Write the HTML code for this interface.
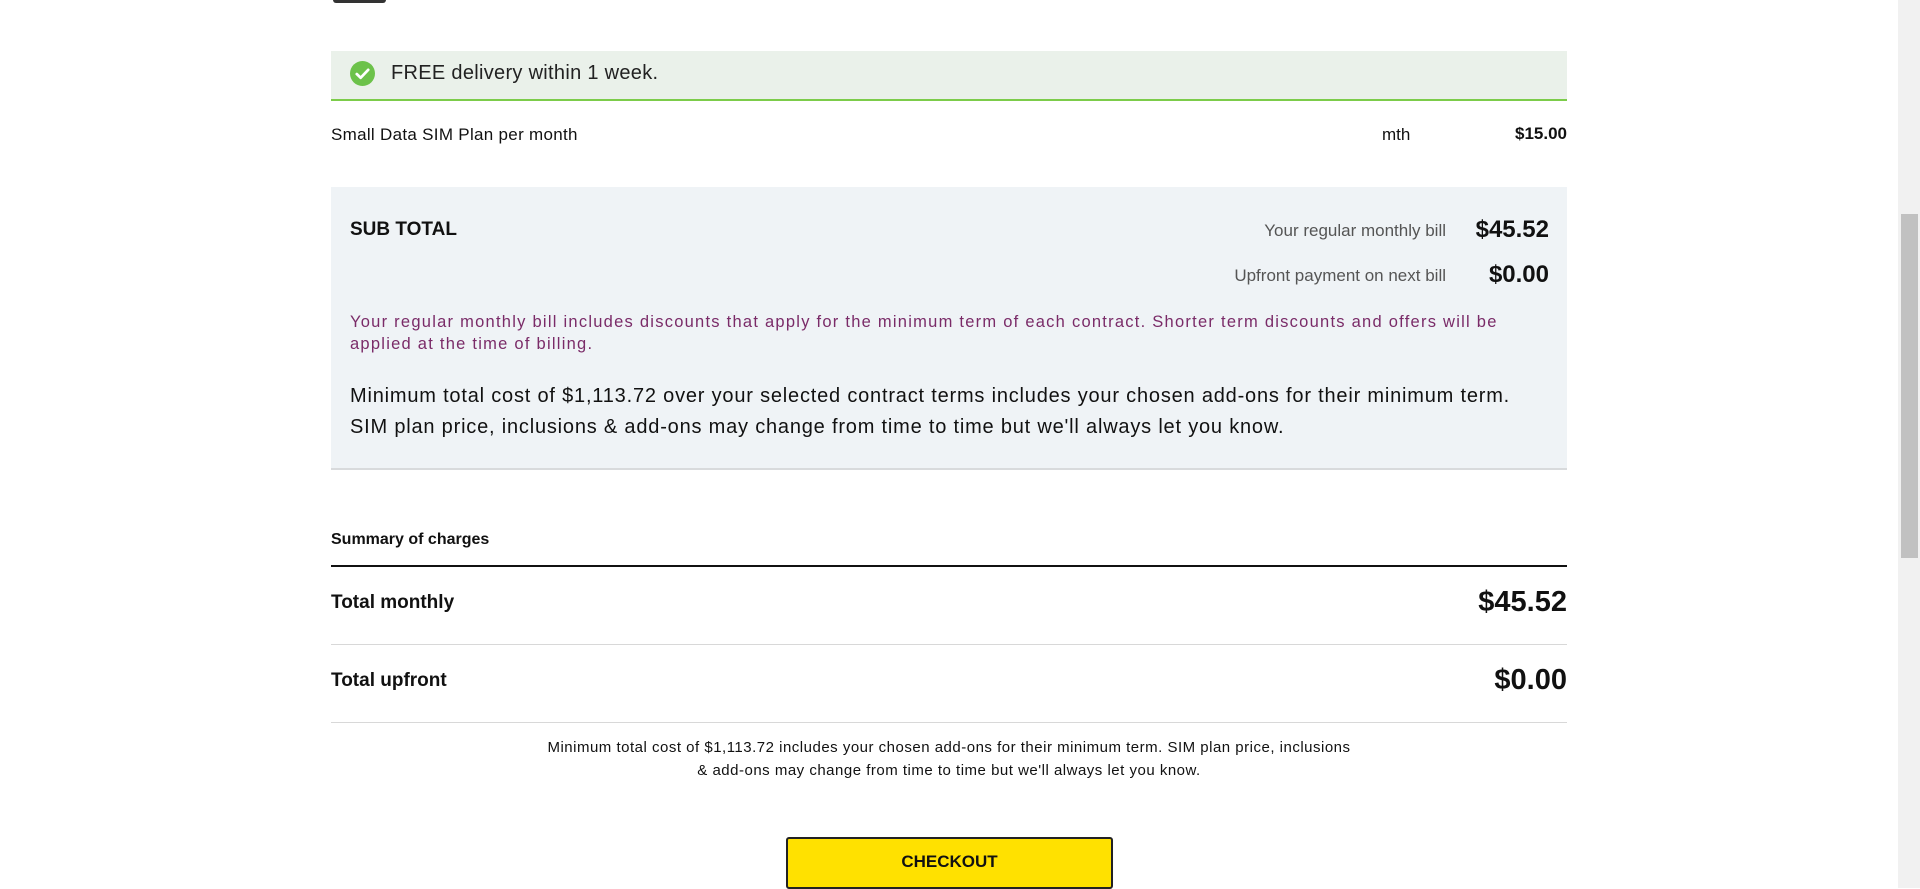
<!DOCTYPE html>
<html><head><style>
*{margin:0;padding:0;box-sizing:border-box}
body{width:1920px;height:888px;overflow:hidden;background:#fff;font-family:"Liberation Sans",sans-serif;color:#111;position:relative}
.a{position:absolute;white-space:nowrap}
.r{text-align:right}
</style></head><body>
<div class="a" style="left:333px;top:0;width:53px;height:3px;background:#333;border-radius:0 0 3px 3px"></div>
<div class="a" style="left:331px;top:51px;width:1236px;height:50px;background:#eaf1ea;border-bottom:2px solid #7ccc4a"></div>
<svg class="a" style="left:350px;top:61px" width="25" height="25" viewBox="0 0 24 24"><circle cx="12" cy="12" r="12" fill="#6cc24a"/><path d="M6.5 12.5l3.7 3.6 7.3-7.6" fill="none" stroke="#fff" stroke-width="2.6" stroke-linecap="round" stroke-linejoin="round"/></svg>
<div class="a" style="left:391px;top:62px;font-size:20px;color:#222;letter-spacing:0.3px">FREE delivery within 1 week.</div>
<div class="a" style="left:331px;top:125px;font-size:17px;letter-spacing:0.3px">Small Data SIM Plan per month</div>
<div class="a" style="left:1382px;top:125px;font-size:17px">mth</div>
<div class="a r" style="right:353px;top:124px;font-size:17px;font-weight:bold">$15.00</div>
<div class="a" style="left:331px;top:187px;width:1236px;height:283px;background:#eff3f6;border-bottom:2px solid #d8dadc"></div>
<div class="a" style="left:350px;top:219px;font-size:19px;font-weight:bold">SUB TOTAL</div>
<div class="a r" style="right:474px;top:221px;font-size:17px;color:#555">Your regular monthly bill</div>
<div class="a r" style="right:371px;top:216px;font-size:24px;font-weight:bold">$45.52</div>
<div class="a r" style="right:474px;top:266px;font-size:17px;color:#555">Upfront payment on next bill</div>
<div class="a r" style="right:371px;top:261px;font-size:24px;font-weight:bold">$0.00</div>
<div class="a" style="left:350px;top:311px;font-size:16.5px;line-height:22px;color:#7a2b68;letter-spacing:1.25px">Your regular monthly bill includes discounts that apply for the minimum term of each contract. Shorter term discounts and offers will be<br>applied at the time of billing.</div>
<div class="a" style="left:350px;top:381px;font-size:20px;line-height:31px;letter-spacing:0.8px">Minimum total cost of $1,113.72 over your selected contract terms includes your chosen add-ons for their minimum term.<br>SIM plan price, inclusions &amp; add-ons may change from time to time but we'll always let you know.</div>
<div class="a" style="left:331px;top:531px;font-size:16px;font-weight:bold">Summary of charges</div>
<div class="a" style="left:331px;top:565px;width:1236px;height:2px;background:#111"></div>
<div class="a" style="left:331px;top:592px;font-size:19px;font-weight:bold">Total monthly</div>
<div class="a r" style="right:353px;top:586px;font-size:29px;font-weight:bold">$45.52</div>
<div class="a" style="left:331px;top:644px;width:1236px;height:1px;background:#d8d8d8"></div>
<div class="a" style="left:331px;top:670px;font-size:19px;font-weight:bold">Total upfront</div>
<div class="a r" style="right:353px;top:664px;font-size:29px;font-weight:bold">$0.00</div>
<div class="a" style="left:331px;top:722px;width:1236px;height:1px;background:#d8d8d8"></div>
<div class="a" style="left:450px;width:998px;top:736px;font-size:15px;line-height:23px;text-align:center;letter-spacing:0.5px">Minimum total cost of $1,113.72 includes your chosen add-ons for their minimum term. SIM plan price, inclusions<br>&amp; add-ons may change from time to time but we'll always let you know.</div>
<div class="a" style="left:786px;top:837px;width:327px;height:52px;background:#ffe100;border:2px solid #222;border-radius:3px;font-size:17px;font-weight:bold;text-align:center;line-height:46px">CHECKOUT</div>
<div class="a" style="left:1898px;top:0;width:22px;height:888px;background:#f1f1f1"></div>
<div class="a" style="left:1901px;top:214px;width:17px;height:344px;background:#c1c1c1"></div>
</body></html>
